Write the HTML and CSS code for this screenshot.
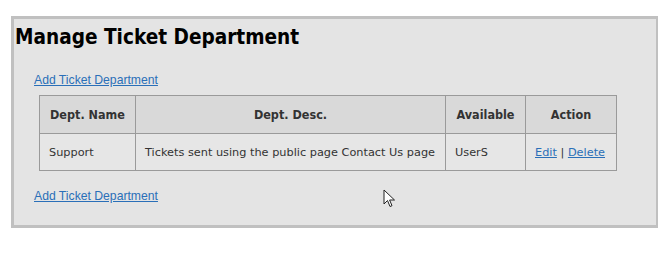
FILE: index.html
```html
<!DOCTYPE html>
<html lang="en">
<head>
    <meta charset="UTF-8">
    <meta name="viewport" content="width=device-width, initial-scale=1.0">
    <title>Manage Ticket Department</title>
    <link rel="stylesheet" href="styles.css">
</head>
<body>
    <div class="panel">
        <h1>Manage Ticket Department</h1>

        <a class="add-link" href="#">Add Ticket Department</a>

        <table class="dept-table">
            <tr>
                <th class="col-name">Dept. Name</th>
                <th class="col-desc">Dept. Desc.</th>
                <th class="col-avail">Available</th>
                <th class="col-action">Action</th>
            </tr>
            <tr>
                <td>Support</td>
                <td>Tickets sent using the public page Contact Us page</td>
                <td>UserS</td>
                <td class="actions"><a href="#">Edit</a> | <a href="#">Delete</a></td>
            </tr>
        </table>

        <a class="add-link bottom" href="#">Add Ticket Department</a>

        <!-- mouse pointer caught in the screenshot -->
        <svg class="cursor" width="13" height="20" viewBox="0 0 13 20">
            <path d="M1 1 L1 15 L4.5 11.5 L7 17.5 L9 16.7 L6.6 11 L11.5 11 Z" fill="#fff" stroke="#222" stroke-width="1"/>
        </svg>
    </div>
</body>
</html>
```

FILE: styles.css
```css
body {
    margin: 0;
    background-color: #fff;
    font-family: "DejaVu Sans", Verdana, sans-serif;
}
.panel {
    position: relative;
    margin: 16px 0 0 11px;
    width: 642px;
    height: 206px;
    background-color: #e4e4e4;
    border: 3px solid #c0c0c0;
    border-right-width: 2px;
}
h1 {
    margin: 0;
    padding: 5px 0 0 1px;
    font-family: "DejaVu Sans Condensed", "DejaVu Sans", sans-serif;
    font-size: 20.6px;
    line-height: 26px;
    color: #000;
}
.add-link {
    display: inline-block;
    margin: 23px 0 0 20px;
    font-family: "Liberation Sans", Arial, sans-serif;
    font-size: 12.2px;
    color: #2a6fb8;
}
.add-link.bottom {
    margin-top: 18px;
}
.dept-table {
    margin: 7px 0 0 25px;
    width: 577px;
    table-layout: fixed;
    border-collapse: collapse;
    font-size: 11.3px;
    color: #333;
}
.dept-table th,
.dept-table td {
    border: 1px solid #9a9a9a;
    padding: 0 9px;
    white-space: nowrap;
}
.dept-table th {
    height: 37px;
    background-color: #d9d9d9;
    font-family: "DejaVu Sans Condensed", "DejaVu Sans", sans-serif;
    font-size: 12.5px;
}
.dept-table td {
    height: 36px;
    background-color: #e6e6e6;
}
.col-name { width: 77px; }
.col-desc { width: 291px; }
.col-avail { width: 61px; }
.col-action { width: 72px; }
.actions a {
    color: #2a6fb8;
}
.cursor {
    position: absolute;
    left: 369px;
    top: 170px;
}
```
